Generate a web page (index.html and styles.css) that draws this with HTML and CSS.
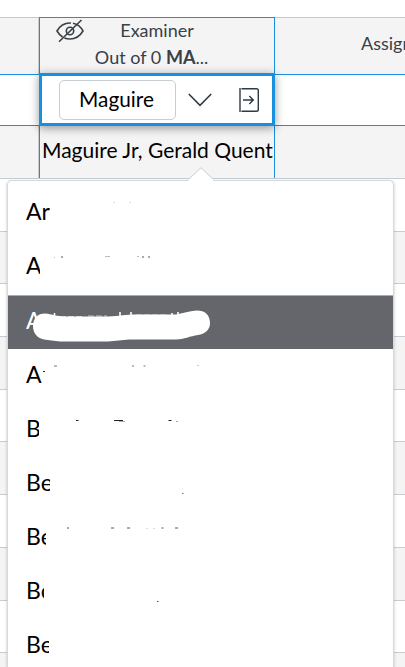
FILE: index.html
```html
<!DOCTYPE html>
<html lang="en">
<head>
<meta charset="utf-8">
<title>Grades</title>
<link rel="stylesheet" href="styles.css">
</head>
<body>
<div class="sheet">
  <div class="row head">
    <div class="cell side"></div>
    <div class="cell mid">
      <svg class="eye" width="28" height="24" viewBox="0 0 28 24" fill="none" stroke="#394047" stroke-width="1.6"><path d="M1 12C4 6.500 8 4 14 4S24 6.500 27 12C24 17 20 20 14 20S4 17 1 12Z" stroke-dasharray="17 2 35 2"/><circle cx="14" cy="12" r="3.700"/><path d="M3 22.800 25.500 1"/></svg>
      <div class="title">Examiner</div>
      <div class="title">Out of 0 <b>MA</b>...</div>
    </div>
    <div class="cell assign">Assign</div>
  </div>
  <div class="row edit">
    <div class="cell"></div>
    <div class="cell editor">
      <div class="field">Maguire</div>
      <svg class="chev" width="24" height="14" viewBox="0 0 24 14" fill="none" stroke="#2d3b45" stroke-width="1.600"><path d="M.8 1 12 12.300 23.200 1"/></svg>
      <svg class="tray" width="21" height="24" viewBox="0 0 21 24" fill="none" stroke="#2d3b45" stroke-width="1.400"><path d="M1 0V24M2.500 .7H17.500Q19.300 .7 19.300 2.500V21.500Q19.300 23.300 17.500 23.300H2.500M4 12H14M10.300 8 14.300 12 10.300 16"/></svg>
    </div>
    <div class="cell"></div>
  </div>
  <div class="row alt name-row">
    <div class="cell side"></div>
    <div class="cell mid name">Maguire Jr, Gerald Quent</div>
    <div class="cell"></div>
  </div>
  <div class="row"></div>
  <div class="row alt short"></div>
  <div class="row"></div>
  <div class="row alt"></div>
  <div class="row short"></div>
  <div class="row alt"></div>
  <div class="row"></div>
  <div class="row alt"></div>
  <div class="row short"></div>
  <div class="row alt last"></div>
</div>
<div class="menu">
  <svg class="tip" width="24" height="14" viewBox="0 0 24 14"><path d="M0 14V12L12 .7 24 12V14Z" fill="#fff"/><path d="M0 12 12 .7 24 12" fill="none" stroke="#c7cdd1"/></svg>
  <div class="item up"><span class="w24">Ar</span><svg class="bits" viewBox="8 187 385 54"><path d="M113 202.500h2M129 202.500h2" stroke="#ddd"/></svg></div>
  <div class="item up"><span class="w14">A</span><svg class="bits" viewBox="8 241 385 54"><path d="M61 257h2M142 257h2M148 257h2" stroke="#555"/><path d="M105 256.500h5M54 257.500h1M137 256.500h2" stroke="#bbb"/></svg></div>
  <div class="item active"><span>A</span><svg class="bits" viewBox="8 295 385 54"><path d="M54.500 313v4M120 312v4M131 312v4M172 313v2M178 312v3" stroke="#fff" stroke-width="1.600"/><path d="M60 316.500H84M88 316H107M136 315H168" stroke="#c5c5c8" stroke-dasharray="6 2"/><path d="M45 313.500C52 314 57 316.500 65 316.500H108C119 316 126 314.500 136 314.500H176C184 313 191 310.500 197 310.500C205 310.500 210 315 210 323C210 330 205 334 198 335C190 336 184 339.500 176 339.500H129L108 341.500H60C54 341 49 340 44 339.500C37 338 33 333 33 326C33 318 38 313.500 45 313.500Z" fill="#fff"/></svg></div>
  <div class="item"><span>A</span><svg class="bits" viewBox="8 349 385 54"><path d="M43 371.500h2" stroke="#222"/><path d="M54 366h3M132 366h2M143.500 366h2" stroke="#777"/><path d="M197 365.500h2" stroke="#ccc"/></svg></div>
  <div class="item"><span class="w13">B</span><svg class="bits" viewBox="8 403 385 54"><path d="M76 420.500h2.500M114 420.500h9M168.500 420.500h3" stroke="#222"/><path d="M119 421.500h6M176 421.500h2" stroke="#aaa"/></svg></div>
  <div class="item"><span class="w24">Be</span><svg class="bits" viewBox="8 457 385 54"><path d="M182 493.500h1.500" stroke="#777"/></svg></div>
  <div class="item"><span class="w20">Be</span><svg class="bits" viewBox="8 511 385 54"><path d="M67 528h2M111 528h3M127 528h3M161.500 528h2M175 528h3" stroke="#555"/><path d="M146 528.500h2M153 528.500h2" stroke="#ddd"/></svg></div>
  <div class="item"><span class="w18">Bo</span><svg class="bits" viewBox="8 565 385 54"><path d="M157 601.500h1.500" stroke="#555"/></svg></div>
  <div class="item end"><span class="w23">Be</span></div>
</div>
</body>
</html>
```
FILE: styles.css
```css
* { box-sizing: border-box; }
body {
  margin: 0;
  width: 405px;
  height: 667px;
  overflow: hidden;
  position: relative;
  background: #fff;
  font-family: Lato, "Liberation Sans", sans-serif;
  color: #000;
}
.sheet { padding-top: 17px; }
.row {
  display: grid;
  grid-template-columns: 39px 236px 130px;
  height: 53px;
  border-bottom: 1px solid #c7cdd1;
}
.row.short { height: 52px; }
.row.last { height: 14px; border: 0; }
.alt, .head { background: #f4f4f4; }
.side { border-right: 1px solid #c7cdd1; }
.head {
  height: 58px;
  border-top: 1px solid #c7c7c7;
  border-bottom-color: #1790df;
}
.mid {
  position: relative;
  border-left: 1px solid #1790df;
  border-right: 1px solid #1790df;
  white-space: nowrap;
}
.head .mid {
  margin-top: -1px;
  border-top: 1px solid #1790df;
  text-align: center;
}
.title {
  position: relative;
  top: -1px;
  font-size: 18px;
  line-height: 27px;
  color: #394047;
}
.title:nth-of-type(2) { padding-right: 11px; }
.eye { position: absolute; left: 16px; top: 1px; }
.assign {
  padding: 12px 0 0 86px;
  font-size: 18px;
  line-height: 27px;
  color: #394047;
}
.edit { height: 51px; border-color: #1790df; }
.editor {
  position: relative;
  z-index: 1;
  display: flex;
  align-items: center;
  height: 53px;
  margin-top: -2px;
  padding-left: 17px;
  background: #fff;
  border: 3px solid #1790df;
  box-shadow: 0 2px 9px rgba(0, 0, 0, .4);
}
.field {
  width: 117px;
  height: 40px;
  padding-right: 2px;
  border: 1px solid #c7cdd1;
  border-radius: 5px;
  font-size: 20.8px;
  line-height: 35px;
  text-align: center;
}
.chev { margin-left: 12px; }
.tray { margin-left: 27px; }
.name {
  padding-left: 2px;
  font-size: 21px;
  line-height: 48px;
}
.menu {
  position: absolute;
  left: 7px;
  top: 180px;
  width: 387px;
  height: 487px;
  padding-top: 6px;
  background: #fff;
  border: 1px solid #d3d9dd;
  border-bottom: 0;
  border-radius: 5px 5px 0 0;
  box-shadow: 0 1px 3px rgba(45, 59, 69, .3);
}
.tip { position: absolute; left: 181px; top: -14px; }
.item {
  position: relative;
  height: 54px;
  padding-left: 18px;
  font-size: 23px;
  line-height: 50px;
}
.item.up { line-height: 48px; }
.item span {
  display: block;
  height: 48px;
  overflow: hidden;
}
.item.end, .item.end span { height: 48px; }
.active { background: #65666b; color: #fff; border-top: 1px solid #aaabad; line-height: 48px; }
.bits {
  position: absolute;
  left: 0;
  top: 0;
  width: 385px;
  height: 54px;
}
.active .bits { top: -1px; }
.item .w13 { width: 13px; }
.item .w14 { width: 14px; }
.item .w18 { width: 18px; }
.item .w20 { width: 20px; }
.item .w23 { width: 23px; }
.item .w24 { width: 24px; }
```
